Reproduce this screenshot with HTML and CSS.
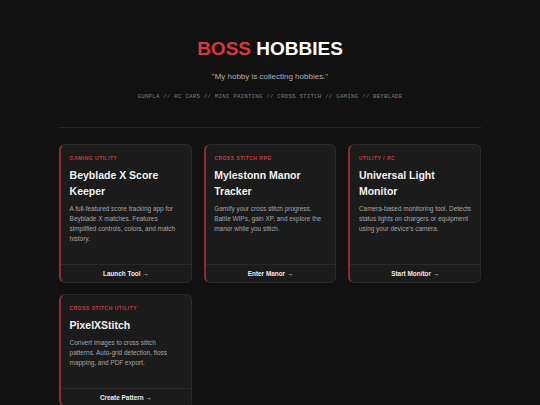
FILE: index.html
```html
<!DOCTYPE html>
<html lang="en">
<head>
    <meta charset="UTF-8">
    <title>Boss Hobbies</title>
    <link rel="stylesheet" href="styles.css">
</head>
<body>
  <div class="wrap">
    <header class="top">
      <h1 class="brand"><span class="red">BOSS</span> HOBBIES</h1>
      <p class="motto">"My hobby is collecting hobbies."</p>
      <p class="hobbies">GUNPLA // RC CARS // MINI PAINTING // CROSS STITCH // GAMING // BEYBLADE</p>
    </header>

    <hr class="line">

    <main class="grid">
      <div class="card">
        <div class="card-body">
          <div class="tag">Gaming Utility</div>
          <h2>Beyblade X Score Keeper</h2>
          <p>A full-featured score tracking app for Beyblade X matches. Features simplified controls, colors, and match history.</p>
        </div>
        <a class="card-link" href="#">Launch Tool &rarr;</a>
      </div>

      <div class="card">
        <div class="card-body">
          <div class="tag">Cross Stitch RPG</div>
          <h2>Mylestonn Manor Tracker</h2>
          <p>Gamify your cross stitch progress. Battle WIPs, gain XP, and explore the manor while you stitch.</p>
        </div>
        <a class="card-link" href="#">Enter Manor &rarr;</a>
      </div>

      <div class="card">
        <div class="card-body">
          <div class="tag">Utility / RC</div>
          <h2>Universal Light Monitor</h2>
          <p>Camera-based monitoring tool. Detects status lights on chargers or equipment using your device's camera.</p>
        </div>
        <a class="card-link" href="#">Start Monitor &rarr;</a>
      </div>

      <div class="card">
        <div class="card-body">
          <div class="tag">Cross Stitch Utility</div>
          <h2>PixelXStitch</h2>
          <p>Convert images to cross stitch patterns. Auto-grid detection, floss mapping, and PDF export.</p>
        </div>
        <a class="card-link" href="#">Create Pattern &rarr;</a>
      </div>
    </main>
  </div>
</body>
</html>
```

FILE: styles.css
```css
body {
    margin: 0;
    background-color: #111111;
    color: #eeeeee;
    font-family: "Liberation Sans", Arial, sans-serif;
}

.wrap {
    max-width: 422px;
    margin: 0 auto;
}

/* header */
.top {
    text-align: center;
    padding-top: 38px;
}

.brand {
    margin: 0;
    font-size: 19px;
    line-height: 22px;
    font-weight: bold;
    color: #ffffff;
}

.red {
    color: #d9363f;
}

.motto {
    margin: 12px 0 0;
    font-size: 8px;
    line-height: 10px;
    color: #b0b0b0;
}

.hobbies {
    margin: 11px 0 0;
    font-family: "Liberation Mono", monospace;
    font-size: 5.8px;
    line-height: 8px;
    letter-spacing: 0.2px;
    color: #7a7a7a;
}

.line {
    border: none;
    border-top: 1px solid #262626;
    margin: 26px 0 16px;
}
/* end header */

/* cards */
.grid {
    display: grid;
    grid-template-columns: repeat(3, 1fr);
    gap: 11px 12px;
}

.card {
    display: flex;
    flex-direction: column;
    background-color: #1b1b1b;
    border: 1px solid #2a2a2a;
    border-left: 2px solid #8e2b36;
    border-radius: 6px;
}

.card-body {
    flex-grow: 1;
    padding: 10px 8.6px 20px;
}

.tag {
    font-size: 5px;
    line-height: 6px;
    font-weight: bold;
    letter-spacing: 0.5px;
    text-transform: uppercase;
    color: #c93a48;
}

.card h2 {
    margin: 6px 0 0;
    font-size: 10.5px;
    line-height: 16px;
    font-weight: bold;
    color: #f2f2f2;
}

.card p {
    margin: 5px 0 0;
    font-size: 6.45px;
    line-height: 10px;
    color: #a6a6a6;
}

.card-link {
    display: block;
    border-top: 1px solid #2a2a2a;
    padding: 5px 0;
    text-align: center;
    font-size: 6.4px;
    line-height: 7px;
    font-weight: bold;
    color: #ececec;
    text-decoration: none;
}
/* end cards */
```
